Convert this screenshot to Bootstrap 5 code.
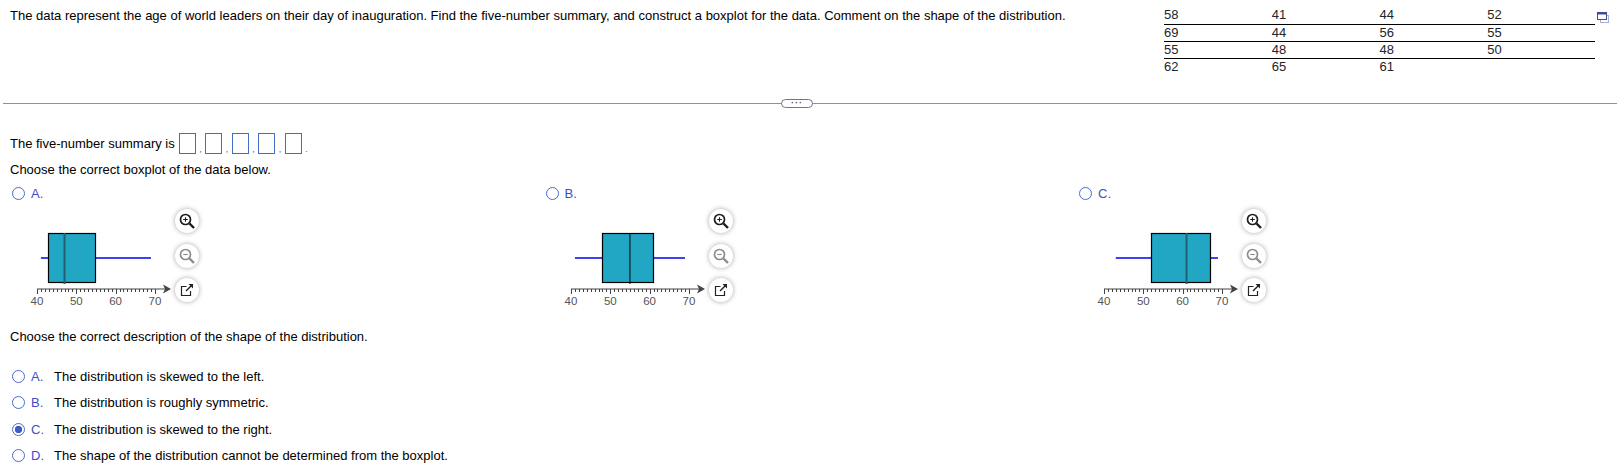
<!DOCTYPE html>
<html lang="en">

<head>
    <meta charset="UTF-8">
    <title>Boxplot question</title>
    <link href="https://cdn.jsdelivr.net/npm/bootstrap@5.3.3/dist/css/bootstrap.min.css" rel="stylesheet">
    <script src="https://cdn.jsdelivr.net/npm/bootstrap@5.3.3/dist/js/bootstrap.bundle.min.js"></script>
    <style>
        body {
            font-family: "Liberation Sans", Arial, sans-serif;
            font-size: 13px;
            line-height: 17px;
            color: #000;
            background: #fff;
            overflow: hidden;
        }

        /* top part */
        .q-head { height: 103px; padding: 7px 8px 0 10px; }
        .q-text { width: 1154px; flex: none; }
        .data-tbl { width: 431px; flex: none; margin: 0; --bs-table-bg: transparent; }
        .data-tbl > tbody > tr > td { width: 108px; padding: 0; height: 17px; line-height: 16px; border-bottom: 1px solid #000; box-shadow: none; }
        .data-tbl > tbody > tr:last-child > td { border-bottom: 0; }
        .copy-ico { margin-left: 2px; margin-top: 5px; flex: none; }

        .q-split { height: 1px; background: #8c929c; margin-left: 3px; }
        .more-pill {
            position: absolute; left: 778px; top: -4px;
            width: 32px; height: 9px; padding: 0;
            background: #fff; border: 1px solid #6f7785; border-radius: 5px;
            color: #4a5160; font-size: 9px; line-height: 7px; letter-spacing: 1px; font-weight: bold;
        }

        /* answers */
        .five-row { margin: 29px 0 0 10px; height: 21px; }
        .ans-box { width: 17px; height: 21px; border: 1px solid #3f6fc0; border-radius: 0; padding: 0; background: #fff; }
        .sep { width: 9.5px; font-size: 9px; color: #666; align-self: flex-end; text-align: center; line-height: 10px; }
        .ans-first { margin-left: 4px; }
        .line-a { margin: 7px 0 0 10px; }
        .choice-col { width: 533.5px; flex: none; padding-left: 12px; }
        .choice-row { margin-top: 7px; margin-left: 0; }

        .rd {
            width: 13px; height: 13px; margin: 0; flex: none; float: none;
            border: 1.3px solid #4a6bd0; background: #fff; --bs-form-check-bg: #fff;
        }
        .rd:checked { background: radial-gradient(circle, #3f5cc0 0 3.4px, #fff 4px); border-color: #4a6bd0; }
        .letter { color: #3c4fc4; margin-left: 6px; }

        .plot-wrap { margin-left: -4px; height: 106px; margin-top: 3px; }
        .plot-svg { width: 167px; height: 106px; flex: none; }
        .tool-col { padding-top: 4px; gap: 10.5px; }
        .tool-btn {
            width: 24px; height: 24px; padding: 0; border: 0;
            background: #fff; box-shadow: 0 0 5px rgba(0, 0, 0, .35);
        }

        .desc-line { margin: 17px 0 0 10px; }
        .opt-list { margin: 18px 0 0 12px; }
        .opt-row { height: 26.5px; }
        .opt-letter { width: 23px; margin-left: 6px; flex: none; }
    </style>
</head>

<body>
    <div class="q-head d-flex">
        <div class="q-text">The data represent the age of world leaders on their day of inauguration. Find the five-number summary, and construct a boxplot for the data. Comment on the shape of the distribution.</div>
        <table class="table data-tbl align-self-start">
            <tbody>
                <tr><td>58</td><td>41</td><td>44</td><td>52</td></tr>
                <tr><td>69</td><td>44</td><td>56</td><td>55</td></tr>
                <tr><td>55</td><td>48</td><td>48</td><td>50</td></tr>
                <tr><td>62</td><td>65</td><td>61</td><td></td></tr>
            </tbody>
        </table>
        <svg class="copy-ico" width="12" height="11" viewBox="0 0 12 11">
            <rect x="3.5" y="3.5" width="8" height="7" fill="#fff" stroke="#a9afd6" />
            <rect x="0.5" y="0.5" width="9" height="7" fill="#fff" stroke="#3f4f96" />
            <rect x="0.5" y="0.5" width="9" height="2" fill="#3f4f96" />
        </svg>
    </div>

    <div class="q-split position-relative">
        <button class="more-pill" type="button">···</button>
    </div>

    <div class="five-row d-flex align-items-center">
        <span>The five-number summary is</span>
        <input class="ans-box ans-first" type="text"><span class="sep">,</span>
        <input class="ans-box" type="text"><span class="sep">,</span>
        <input class="ans-box" type="text"><span class="sep">,</span>
        <input class="ans-box" type="text"><span class="sep">,</span>
        <input class="ans-box" type="text"><span class="sep">.</span>
    </div>

    <div class="line-a">Choose the correct boxplot of the data below.</div>

    <div class="d-flex">
        <div class="choice-col" id="plotA"></div>
        <div class="choice-col" id="plotB"></div>
        <div class="choice-col" id="plotC"></div>
    </div>

    <div class="desc-line">Choose the correct description of the shape of the distribution.</div>

    <div class="opt-list">
        <div class="opt-row d-flex align-items-center"><input class="form-check-input rd" type="radio" name="shape"><span class="letter opt-letter">A.</span><span>The distribution is skewed to the left.</span></div>
        <div class="opt-row d-flex align-items-center"><input class="form-check-input rd" type="radio" name="shape"><span class="letter opt-letter">B.</span><span>The distribution is roughly symmetric.</span></div>
        <div class="opt-row d-flex align-items-center"><input class="form-check-input rd" type="radio" name="shape" checked><span class="letter opt-letter">C.</span><span>The distribution is skewed to the right.</span></div>
        <div class="opt-row d-flex align-items-center"><input class="form-check-input rd" type="radio" name="shape"><span class="letter opt-letter">D.</span><span>The shape of the distribution cannot be determined from the boxplot.</span></div>
    </div>

    <script>
        // five-number summaries read off the three plots
        const plots = [
            { id: 'plotA', label: 'A.', min: 41, q1: 43, med: 47, q3: 55, max: 69, medColor: '#24606f', medW: 2 },
            { id: 'plotB', label: 'B.', min: 41, q1: 48, med: 55, q3: 61, max: 69, medColor: '#000', medW: 1 },
            { id: 'plotC', label: 'C.', min: 43, q1: 52, med: 61, q3: 67, max: 69, medColor: '#24606f', medW: 2 }
        ];

        const x0 = 29, unit = 3.93, midY = 53, axisY = 84;
        const px = (v) => x0 + (v - 40) * unit;

        function axis() {
            let s = `<line x1="${x0}" y1="${axisY}" x2="157" y2="${axisY}" stroke="#444" stroke-width="1"/>`;
            s += `<path d="M155 79.5 L163 84 L155 88.5 L157 84 Z" fill="#444"/>`;
            for (let v = 40; v <= 70; v++) {
                const x = Math.round(px(v)) + 0.5;
                s += `<line x1="${x}" y1="${axisY}" x2="${x}" y2="${axisY + (v % 10 ? 3 : 5)}" stroke="#444" stroke-width="1"/>`;
            }
            for (let v = 40; v <= 70; v += 10) {
                s += `<text x="${px(v)}" y="100" text-anchor="middle" font-size="11.5" fill="#555" font-family="Liberation Sans">${v}</text>`;
            }
            return s;
        }

        function plotSvg(p) {
            return `<svg class="plot-svg" viewBox="0 0 167 106">
                <line x1="${px(p.min)}" y1="${midY}" x2="${px(p.max)}" y2="${midY}" stroke="#0000f0" stroke-width="1.4"/>
                <rect x="${Math.floor(px(p.q1)) + 0.5}" y="28.5" width="${Math.round((p.q3 - p.q1) * unit)}" height="49" fill="#21a6c4" stroke="#000" stroke-width="1.2"/>
                <line x1="${px(p.med)}" y1="28" x2="${px(p.med)}" y2="79" stroke="${p.medColor}" stroke-width="${p.medW}"/>
                ${axis()}
            </svg>`;
        }

        const tools = `<div class="tool-col d-flex flex-column">
            <button class="tool-btn rounded-circle d-flex align-items-center justify-content-center" type="button">
                <svg width="18" height="18" viewBox="0 0 18 18" fill="none" stroke="#1c1c1c"><circle cx="7.5" cy="7.5" r="5" stroke-width="1.7"/><path d="M11.5 11.5 L16 16" stroke-width="2.4"/><path d="M5.2 7.5h4.6M7.5 5.2v4.6" stroke-width="1.1"/></svg>
            </button>
            <button class="tool-btn rounded-circle d-flex align-items-center justify-content-center" type="button">
                <svg width="18" height="18" viewBox="0 0 18 18" fill="none" stroke="#8c8c8c"><circle cx="7.5" cy="7.5" r="5" stroke-width="1.7"/><path d="M11.5 11.5 L16 16" stroke-width="2.4"/><path d="M5.2 7.5h4.6" stroke-width="1.1"/></svg>
            </button>
            <button class="tool-btn rounded-circle d-flex align-items-center justify-content-center" type="button">
                <svg width="14" height="14" viewBox="0 0 14 14" fill="none" stroke="#222"><path d="M6.5 3.5H1.5V12.5H10.5V8" stroke-width="1.2"/><path d="M6 8 L12 2" stroke-width="1.4"/><path d="M8.5 1H13V5.5Z" fill="#222" stroke="none"/></svg>
            </button>
        </div>`;

        plots.forEach((p) => {
            document.getElementById(p.id).innerHTML = `
                <div class="choice-row d-flex align-items-center">
                    <input class="form-check-input rd" type="radio" name="plot">
                    <span class="letter">${p.label}</span>
                </div>
                <div class="plot-wrap d-flex">${plotSvg(p)}${tools}</div>`;
        });
    </script>
</body>

</html>
